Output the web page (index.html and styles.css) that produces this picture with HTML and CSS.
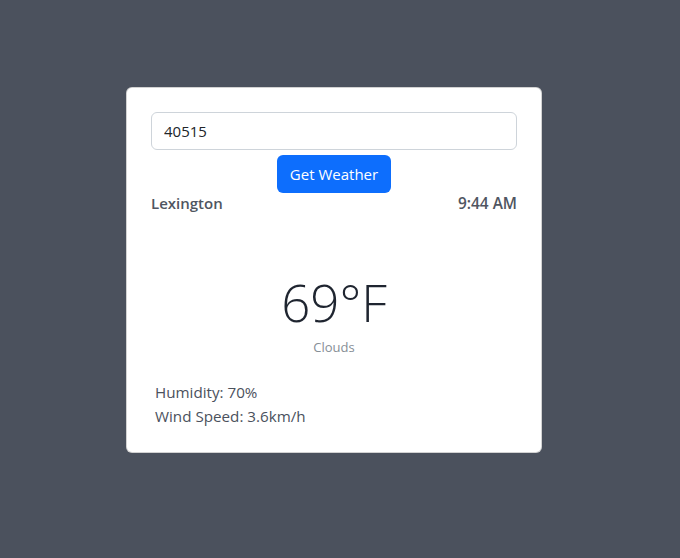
FILE: index.html
```html
<!DOCTYPE html>
<html lang="en">
<head>
<meta charset="utf-8">
<title>Weather</title>
<link rel="stylesheet" href="styles.css">
</head>
<body>
<div class="page">
  <div class="card">
    <input class="zip-input" type="text" value="40515">
    <div class="btn-row">
      <button class="btn">Get Weather</button>
    </div>
    <div class="head-row">
      <span class="city">Lexington</span>
      <span class="time">9:44 AM</span>
    </div>
    <div class="temp-block">
      <div class="temp">69°F</div>
      <div class="desc">Clouds</div>
    </div>
    <div class="details">
      <div>Humidity: 70%</div>
      <div>Wind Speed: 3.6km/h</div>
    </div>
  </div>
</div>
</body>
</html>
```
FILE: styles.css
```css
html, body {
  margin: 0;
  padding: 0;
}
body {
  background: #4b515d;
  font-family: "Open Sans", "Noto Sans", sans-serif;
  width: 680px;
  height: 558px;
}
.page {
  padding: 87px 0 0 126px;
}
.card {
  box-sizing: border-box;
  width: 416px;
  height: 366px;
  background: #fff;
  border: 1px solid rgba(0,0,0,0.175);
  border-radius: 6px;
  padding: 24px;
}
.zip-input {
  display: block;
  box-sizing: border-box;
  width: 100%;
  height: 38px;
  margin: 0;
  border: 1px solid #ced4da;
  border-radius: 6px;
  padding: 6px 12px;
  font-family: inherit;
  font-size: 15px;
  color: #212529;
  outline: none;
}
.btn-row {
  display: flex;
  justify-content: center;
  margin-top: 5px;
}
.btn {
  box-sizing: border-box;
  height: 38px;
  width: 114px;
  background: #0d6efd;
  color: #fff;
  border: none;
  border-radius: 6px;
  font-family: inherit;
  font-size: 15px;
  padding: 0;
}
.head-row {
  display: flex;
  justify-content: space-between;
  align-items: baseline;
  font-weight: 600;
  font-size: 15px;
  color: #4f5561;
  margin-top: -1px;
  line-height: 22px;
}
.time {
  font-size: 15.4px;
}
.temp-block {
  text-align: center;
  margin-top: 57px;
}
.temp {
  font-size: 51px;
  font-weight: 300;
  color: #1f2530;
  line-height: 60px;
}
.desc {
  font-size: 13px;
  color: #868e96;
  line-height: 18px;
  margin-top: 6px;
}
.details {
  padding-left: 4px;
  margin-top: 24px;
  font-size: 15.2px;
  line-height: 24px;
  color: #4b515d;
}
```
